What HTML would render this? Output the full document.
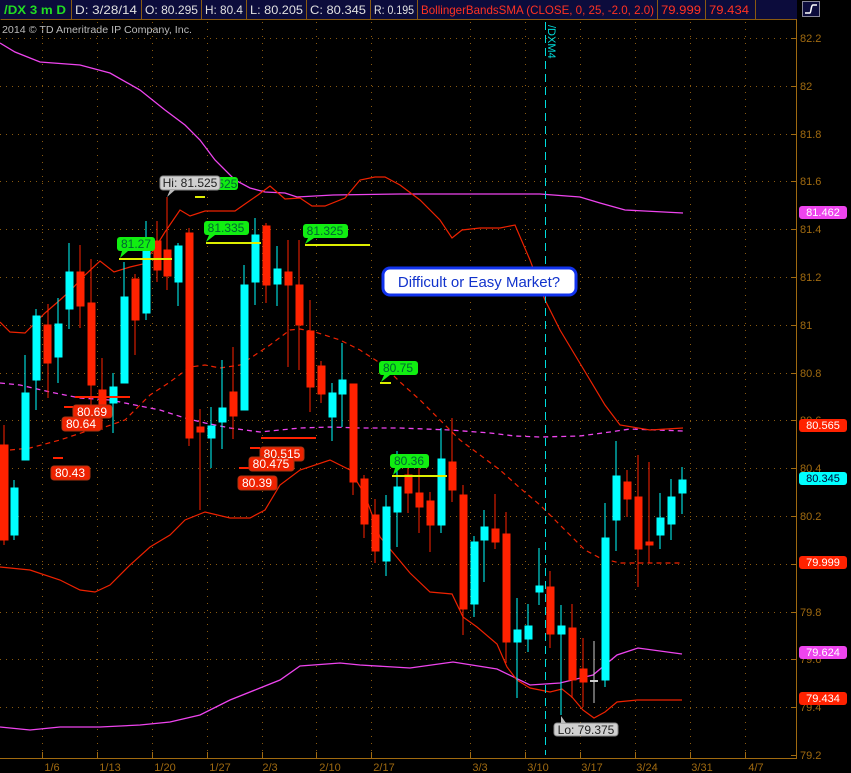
<!DOCTYPE html>
<html><head><meta charset="utf-8"><style>
html,body{margin:0;padding:0;background:#000;width:851px;height:773px;overflow:hidden}
svg{display:block;font-family:"Liberation Sans",sans-serif}
</style></head><body>
<svg width="851" height="773" viewBox="0 0 851 773" xmlns="http://www.w3.org/2000/svg">
<rect width="851" height="773" fill="#000"/>
<!-- top bar -->
<rect x="0" y="0" width="797" height="19" fill="#0c0c3c"/>
<g stroke="#8a5a10" stroke-width="1">
<line x1="0.5" y1="19.5" x2="797" y2="19.5"/>
<line x1="71.5" y1="0" x2="71.5" y2="19"/><line x1="141.5" y1="0" x2="141.5" y2="19"/>
<line x1="201.5" y1="0" x2="201.5" y2="19"/><line x1="246.5" y1="0" x2="246.5" y2="19"/>
<line x1="306.5" y1="0" x2="306.5" y2="19"/><line x1="370.5" y1="0" x2="370.5" y2="19"/>
<line x1="417.5" y1="0" x2="417.5" y2="19"/><line x1="657.5" y1="0" x2="657.5" y2="19"/>
<line x1="705.5" y1="0" x2="705.5" y2="19"/><line x1="755.5" y1="0" x2="755.5" y2="19"/>
</g>
<g font-size="12" fill="#e0e0e0" lengthAdjust="spacingAndGlyphs">
<text x="4" y="14" fill="#22dd22" font-weight="bold" textLength="62" lengthAdjust="spacingAndGlyphs">/DX 3 m D</text>
<text x="75" y="14" textLength="62" lengthAdjust="spacingAndGlyphs">D: 3/28/14</text>
<text x="145" y="14" textLength="53" lengthAdjust="spacingAndGlyphs">O: 80.295</text>
<text x="205" y="14" textLength="38" lengthAdjust="spacingAndGlyphs">H: 80.4</text>
<text x="250" y="14" textLength="53" lengthAdjust="spacingAndGlyphs">L: 80.205</text>
<text x="310" y="14" textLength="56" lengthAdjust="spacingAndGlyphs">C: 80.345</text>
<text x="374" y="14" textLength="40" lengthAdjust="spacingAndGlyphs">R: 0.195</text>
<text x="421" y="14" fill="#ff3322" textLength="233" lengthAdjust="spacingAndGlyphs">BollingerBandsSMA (CLOSE, 0, 25, -2.0, 2.0)</text>
<text x="661" y="14" fill="#ff3322" textLength="40" lengthAdjust="spacingAndGlyphs">79.999</text>
<text x="709" y="14" fill="#ff3322" textLength="40" lengthAdjust="spacingAndGlyphs">79.434</text>
</g>
<rect x="802.5" y="1.5" width="17" height="15" fill="#0c0c3c" stroke="#889" stroke-width="1"/>
<path d="M805 13 H810 C811 13 811 5 813 5 H817" stroke="#fff" stroke-width="1.5" fill="none"/>
<text x="2" y="33" font-size="10" fill="#bbb" textLength="190" lengthAdjust="spacingAndGlyphs">2014 © TD Ameritrade IP Company, Inc.</text>

<!-- grid -->
<g stroke="#8a5a10" stroke-width="1" stroke-dasharray="1,5">
<line x1="0" y1="38.5" x2="797" y2="38.5"/><line x1="0" y1="86.5" x2="797" y2="86.5"/>
<line x1="0" y1="134.5" x2="797" y2="134.5"/><line x1="0" y1="181.5" x2="797" y2="181.5"/>
<line x1="0" y1="229.5" x2="797" y2="229.5"/><line x1="0" y1="277.5" x2="797" y2="277.5"/>
<line x1="0" y1="325.5" x2="797" y2="325.5"/><line x1="0" y1="373.5" x2="797" y2="373.5"/>
<line x1="0" y1="420.5" x2="797" y2="420.5"/><line x1="0" y1="468.5" x2="797" y2="468.5"/>
<line x1="0" y1="516.5" x2="797" y2="516.5"/><line x1="0" y1="564.5" x2="797" y2="564.5"/>
<line x1="0" y1="612.5" x2="797" y2="612.5"/><line x1="0" y1="659.5" x2="797" y2="659.5"/>
<line x1="0" y1="707.5" x2="797" y2="707.5"/>
<g stroke-dasharray="1,6">
<line x1="42.5" y1="22" x2="42.5" y2="758"/><line x1="97.5" y1="22" x2="97.5" y2="758"/>
<line x1="152.5" y1="22" x2="152.5" y2="758"/><line x1="207.5" y1="22" x2="207.5" y2="758"/>
<line x1="262.5" y1="22" x2="262.5" y2="758"/><line x1="316.5" y1="22" x2="316.5" y2="758"/>
<line x1="371.5" y1="22" x2="371.5" y2="758"/><line x1="470.5" y1="22" x2="470.5" y2="758"/>
<line x1="525.5" y1="22" x2="525.5" y2="758"/><line x1="580.5" y1="22" x2="580.5" y2="758"/>
<line x1="635.5" y1="22" x2="635.5" y2="758"/><line x1="690.5" y1="22" x2="690.5" y2="758"/>
<line x1="745.5" y1="22" x2="745.5" y2="758"/>
</g></g>
<!-- axes -->
<g stroke="#a06a10" stroke-width="1">
<line x1="0" y1="758.5" x2="797" y2="758.5"/>
<line x1="796.5" y1="19" x2="796.5" y2="759"/>
<path d="M42.5 752V758M97.5 752V758M152.5 752V758M207.5 752V758M262.5 752V758M316.5 752V758M371.5 752V758M470.5 752V758M525.5 752V758M580.5 752V758M635.5 752V758M690.5 752V758M745.5 752V758"/>
<path d="M791 38.5H797M791 86.5H797M791 134.5H797M791 181.5H797M791 229.5H797M791 277.5H797M791 325.5H797M791 373.5H797M791 420.5H797M791 468.5H797M791 516.5H797M791 564.5H797M791 612.5H797M791 659.5H797M791 707.5H797M791 755.5H797"/>
</g>
<g font-size="11" fill="#a06a10">
<text x="800" y="42">82.2</text><text x="800" y="90">82</text><text x="800" y="138">81.8</text>
<text x="800" y="185">81.6</text><text x="800" y="233">81.4</text><text x="800" y="281">81.2</text>
<text x="800" y="329">81</text><text x="800" y="377">80.8</text><text x="800" y="424">80.6</text>
<text x="800" y="472">80.4</text><text x="800" y="520">80.2</text><text x="800" y="616">79.8</text>
<text x="800" y="663">79.6</text><text x="800" y="711">79.4</text><text x="800" y="759">79.2</text>
</g>
<g font-size="11" fill="#a06a10" text-anchor="middle">
<text x="52" y="771">1/6</text><text x="110" y="771">1/13</text><text x="165" y="771">1/20</text>
<text x="220" y="771">1/27</text><text x="270" y="771">2/3</text><text x="330" y="771">2/10</text>
<text x="384" y="771">2/17</text><text x="480" y="771">3/3</text><text x="538" y="771">3/10</text>
<text x="592" y="771">3/17</text><text x="647" y="771">3/24</text><text x="702" y="771">3/31</text>
<text x="756" y="771">4/7</text>
</g>

<!-- pink lines -->
<g fill="none" stroke="#ee44ee" stroke-width="1.3">
<polyline points="0,43 15,52 40,62 80,65 110,73 140,90 165,110 185,125 200,140 215,160 235,180 250,188 265,192 285,193 297,197 333,195 400,194 480,194 540,194 580,197 600,203 625,210 683,213"/>
<polyline points="0,727 30,730 60,727 100,727 140,725 170,722 200,715 230,700 260,688 280,680 300,666 340,663 360,665 410,668 453,662 497,669 530,685 560,683 593,675 617,655 638,648 682,654"/>
<polyline stroke-dasharray="5,4" points="0,383 20,385 50,392 80,398 110,400 135,405 160,410 185,418 205,423 230,428 260,432 300,428 330,427 360,428 400,428 450,430 490,433 515,436 540,437 580,436 610,432 630,429 683,431"/>
</g>
<!-- red bands -->
<g fill="none" stroke="#ee2200" stroke-width="1.2">
<polyline points="0,322 10,332 25,333 45,313 60,300 70,291 85,275 100,261 114,272 130,267 143,264 155,248 165,232 180,210 190,216 205,211 235,211 245,204 258,195 270,186 285,199 300,198 312,206 325,206 345,198 360,180 375,177 385,177 400,185 420,200 440,220 452,238 462,230 480,228 500,228 515,225 530,260 545,300 560,330 575,355 590,380 605,405 620,425 650,430 683,428"/>
<polyline points="0,567 30,570 60,580 80,590 95,592 110,585 130,565 150,547 170,535 185,520 205,512 230,518 250,518 265,510 280,485 300,470 330,460 350,470 365,495 380,537 410,573 430,592 452,594 463,617 477,627 497,644 507,667 517,680 530,688 550,692 562,689 572,697 583,710 594,718 605,712 617,702 637,700 682,700"/>
<polyline stroke-dasharray="5,4" points="10,450 30,448 60,440 90,430 105,427 125,420 150,395 170,382 190,367 205,365 220,368 240,365 255,355 270,345 290,330 300,329 315,332 340,340 360,350 383,365 400,382 420,400 440,420 460,440 480,455 500,470 520,488 540,505 555,520 570,535 585,550 600,558 620,563 683,563"/>
</g>

<!-- candles -->
<g stroke-width="1">
<g fill="#ff2200" stroke="#ff2200">
<line x1="4" y1="425" x2="4" y2="545"/><rect x="0" y="445" width="8" height="95"/>
<line x1="48" y1="304" x2="48" y2="398"/><rect x="44" y="325" width="7" height="38"/>
<line x1="80" y1="245" x2="80" y2="328"/><rect x="77" y="272" width="7" height="34"/>
<line x1="91" y1="259" x2="91" y2="407"/><rect x="88" y="303" width="7" height="82"/>
<line x1="102" y1="358" x2="102" y2="430"/><rect x="99" y="390" width="7" height="20"/>
<line x1="135" y1="274" x2="135" y2="355"/><rect x="132" y="279" width="7" height="41"/>
<line x1="157" y1="221" x2="157" y2="282"/><rect x="154" y="241" width="7" height="29"/>
<line x1="167" y1="197" x2="167" y2="290"/><rect x="164" y="250" width="7" height="26"/>
<line x1="189" y1="228" x2="189" y2="446"/><rect x="186" y="233" width="7" height="205"/>
<line x1="200" y1="409" x2="200" y2="510"/><rect x="197" y="427" width="7" height="5"/>
<line x1="233" y1="347" x2="233" y2="439"/><rect x="230" y="392" width="7" height="24"/>
<line x1="266" y1="223" x2="266" y2="303"/><rect x="263" y="226" width="7" height="59"/>
<line x1="288" y1="240" x2="288" y2="367"/><rect x="285" y="272" width="7" height="13"/>
<line x1="299" y1="240" x2="299" y2="370"/><rect x="296" y="285" width="7" height="40"/>
<line x1="310" y1="300" x2="310" y2="412"/><rect x="307" y="331" width="7" height="56"/>
<line x1="321" y1="361" x2="321" y2="403"/><rect x="318" y="366" width="7" height="28"/>
<line x1="353" y1="384" x2="353" y2="495"/><rect x="350" y="384" width="7" height="98"/>
<line x1="364" y1="475" x2="364" y2="538"/><rect x="361" y="479" width="7" height="45"/>
<line x1="375" y1="499" x2="375" y2="563"/><rect x="372" y="515" width="7" height="36"/>
<line x1="408" y1="468" x2="408" y2="513"/><rect x="405" y="475" width="7" height="18"/>
<line x1="419" y1="468" x2="419" y2="533"/><rect x="416" y="493" width="7" height="14"/>
<line x1="430" y1="492" x2="430" y2="552"/><rect x="427" y="501" width="7" height="24"/>
<line x1="452" y1="418" x2="452" y2="502"/><rect x="449" y="462" width="7" height="28"/>
<line x1="463" y1="485" x2="463" y2="635"/><rect x="460" y="495" width="7" height="114"/>
<line x1="495" y1="494" x2="495" y2="549"/><rect x="492" y="529" width="7" height="13"/>
<line x1="506" y1="512" x2="506" y2="663"/><rect x="503" y="534" width="7" height="108"/>
<line x1="550" y1="571" x2="550" y2="648"/><rect x="547" y="587" width="7" height="47"/>
<line x1="572" y1="604" x2="572" y2="698"/><rect x="569" y="628" width="7" height="52"/>
<line x1="583" y1="638" x2="583" y2="707"/><rect x="580" y="669" width="7" height="13"/>
<line x1="627" y1="470" x2="627" y2="517"/><rect x="624" y="482" width="7" height="17"/>
<line x1="638" y1="455" x2="638" y2="587"/><rect x="635" y="497" width="7" height="52"/>
<line x1="649" y1="462" x2="649" y2="563"/><rect x="646" y="542" width="7" height="3"/>
</g>
<g fill="#00ffff" stroke="#00ffff">
<line x1="14" y1="480" x2="14" y2="540"/><rect x="11" y="488" width="7" height="47"/>
<line x1="25" y1="355" x2="25" y2="460"/><rect x="22" y="393" width="7" height="67"/>
<line x1="36" y1="309" x2="36" y2="410"/><rect x="33" y="316" width="7" height="64"/>
<line x1="58" y1="298" x2="58" y2="383"/><rect x="55" y="324" width="7" height="33"/>
<line x1="69" y1="243" x2="69" y2="329"/><rect x="66" y="272" width="7" height="37"/>
<line x1="113" y1="373" x2="113" y2="433"/><rect x="110" y="387" width="7" height="16"/>
<line x1="124" y1="262" x2="124" y2="383"/><rect x="121" y="297" width="7" height="86"/>
<line x1="146" y1="221" x2="146" y2="320"/><rect x="143" y="244" width="7" height="69"/>
<line x1="178" y1="243" x2="178" y2="306"/><rect x="175" y="246" width="7" height="36"/>
<line x1="211" y1="407" x2="211" y2="468"/><rect x="208" y="426" width="7" height="12"/>
<line x1="222" y1="360" x2="222" y2="449"/><rect x="219" y="408" width="7" height="14"/>
<line x1="244" y1="265" x2="244" y2="410"/><rect x="241" y="285" width="7" height="125"/>
<line x1="255" y1="218" x2="255" y2="305"/><rect x="252" y="235" width="7" height="47"/>
<line x1="277" y1="246" x2="277" y2="306"/><rect x="274" y="269" width="7" height="15"/>
<line x1="332" y1="383" x2="332" y2="441"/><rect x="329" y="393" width="7" height="24"/>
<line x1="342" y1="343" x2="342" y2="427"/><rect x="339" y="380" width="7" height="14"/>
<line x1="386" y1="495" x2="386" y2="576"/><rect x="383" y="507" width="7" height="54"/>
<line x1="397" y1="451" x2="397" y2="547"/><rect x="394" y="487" width="7" height="25"/>
<line x1="441" y1="428" x2="441" y2="533"/><rect x="438" y="459" width="7" height="66"/>
<line x1="474" y1="536" x2="474" y2="617"/><rect x="471" y="542" width="7" height="62"/>
<line x1="484" y1="510" x2="484" y2="582"/><rect x="481" y="527" width="7" height="13"/>
<line x1="517" y1="598" x2="517" y2="698"/><rect x="514" y="630" width="7" height="12"/>
<line x1="528" y1="604" x2="528" y2="652"/><rect x="525" y="626" width="7" height="13"/>
<line x1="539" y1="548" x2="539" y2="605"/><rect x="536" y="586" width="7" height="6"/>
<line x1="561" y1="605" x2="561" y2="715"/><rect x="558" y="626" width="7" height="8"/>
<line x1="605" y1="503" x2="605" y2="687"/><rect x="602" y="538" width="7" height="142"/>
<line x1="616" y1="441" x2="616" y2="551"/><rect x="613" y="476" width="7" height="44"/>
<line x1="660" y1="493" x2="660" y2="549"/><rect x="657" y="518" width="7" height="17"/>
<line x1="671" y1="479" x2="671" y2="540"/><rect x="668" y="497" width="7" height="27"/>
<line x1="682" y1="467" x2="682" y2="514"/><rect x="679" y="480" width="7" height="13"/>
</g>
<g stroke="#ccc"><line x1="594" y1="641" x2="594" y2="703"/><line x1="590" y1="681" x2="598" y2="681" stroke-width="2"/></g>
</g>

<!-- vertical expiration line -->
<line x1="545.5" y1="22" x2="545.5" y2="755" stroke="#00dddd" stroke-dasharray="8,5"/>
<text transform="translate(548,25) rotate(90)" font-size="11" fill="#00dddd">/DXM4</text>

<!-- yellow/red lines -->
<g stroke="#ddee00" stroke-width="2">
<line x1="119" y1="259" x2="172" y2="259"/><line x1="206" y1="243" x2="261" y2="243"/>
<line x1="305" y1="245" x2="370" y2="245"/><line x1="380" y1="383" x2="391" y2="383"/>
<line x1="392" y1="476" x2="447" y2="476"/><line x1="195" y1="197" x2="205" y2="197"/>
</g>
<g stroke="#ff2200" stroke-width="2">
<line x1="75" y1="397" x2="130" y2="397"/><line x1="261" y1="438" x2="316" y2="438"/>
<line x1="64" y1="407" x2="73" y2="407"/><line x1="53" y1="458" x2="63" y2="458"/>
<line x1="250" y1="448" x2="260" y2="448"/><line x1="239" y1="468" x2="249" y2="468"/>
</g>

<!-- labels -->
<g font-size="12">
<rect x="200" y="177" width="38" height="13" rx="3" fill="#11ee11"/><text x="219" y="188" text-anchor="middle" fill="#063">81.525</text>
<rect x="160" y="176" width="60" height="14" rx="3" fill="#d0d0d0" stroke="#888"/><text x="190" y="187" text-anchor="middle" fill="#222">Hi: 81.525</text>
<path d="M170 190 L167 197 L175 190Z" fill="#bbb"/>
<g fill="#11ee11"><rect x="117" y="237" width="38" height="14" rx="3"/><rect x="204" y="221" width="45" height="14" rx="3"/><rect x="303" y="224" width="45" height="14" rx="3"/><rect x="379" y="361" width="39" height="14" rx="3"/><rect x="390" y="454" width="39" height="14" rx="3"/>
<path d="M122 251L120 258L128 251Z M209 235L206 242L215 235Z M308 238L305 244L314 238Z M384 375L381 382L390 375Z M395 468L393 475L401 468Z"/></g>
<g fill="#063" text-anchor="middle"><text x="136" y="248">81.27</text><text x="226" y="232">81.335</text><text x="325" y="235">81.325</text><text x="398" y="372">80.75</text><text x="409" y="465">80.36</text></g>
<g fill="#ee2200" stroke="#a31"><rect x="73" y="405" width="39" height="13" rx="3"/><rect x="62" y="417" width="39" height="14" rx="3"/><rect x="51" y="466" width="39" height="14" rx="3"/><rect x="260" y="447" width="44" height="14" rx="3"/><rect x="249" y="457" width="45" height="14" rx="3"/><rect x="238" y="476" width="39" height="14" rx="3"/></g>
<g fill="#fff" text-anchor="middle"><text x="92" y="416">80.69</text><text x="81" y="428">80.64</text><text x="70" y="477">80.43</text><text x="282" y="458">80.515</text><text x="271" y="468">80.475</text><text x="257" y="487">80.39</text></g>
<rect x="554" y="723" width="64" height="13" rx="3" fill="#d0d0d0" stroke="#888"/><text x="586" y="734" text-anchor="middle" fill="#222">Lo: 79.375</text>
<path d="M561 716 L561 723 L566 723Z" fill="#bbb"/>
</g>
<rect x="383" y="268" width="193" height="27" rx="7" fill="#fff" stroke="#1133ee" stroke-width="3"/>
<text x="479" y="287" font-size="15" text-anchor="middle" fill="#1133cc">Difficult or Easy Market?</text>

<!-- right labels -->
<g font-size="11" text-anchor="middle">
<rect x="799" y="206" width="48" height="13" rx="3" fill="#ee44ee"/><text x="823" y="216" fill="#fff">81.462</text>
<rect x="799" y="419" width="48" height="13" rx="3" fill="#ff2200"/><text x="823" y="429" fill="#fff">80.565</text>
<rect x="799" y="472" width="48" height="13" rx="3" fill="#00ffff"/><text x="823" y="482" fill="#003">80.345</text>
<rect x="799" y="556" width="48" height="13" rx="3" fill="#ff2200"/><text x="823" y="566" fill="#fff">79.999</text>
<rect x="799" y="646" width="48" height="13" rx="3" fill="#ee44ee"/><text x="823" y="656" fill="#fff">79.624</text>
<rect x="799" y="692" width="48" height="13" rx="3" fill="#ff2200"/><text x="823" y="702" fill="#fff">79.434</text>
</g>
</svg>
</body></html>
